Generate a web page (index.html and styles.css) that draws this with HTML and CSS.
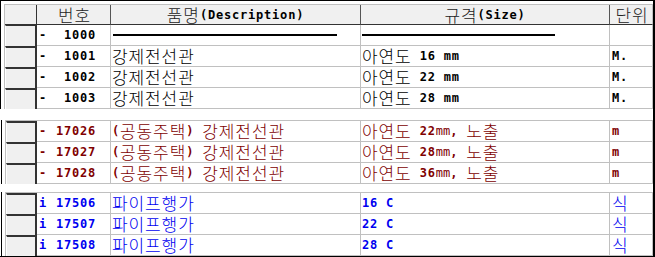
FILE: index.html
```html
<!DOCTYPE html>
<html lang="ko">
<head>
<meta charset="utf-8">
<title>Grid</title>
<link rel="stylesheet" href="styles.css">
</head>
<body>
<div class="sheet">
  <div class="sec sec-a">
    <div class="grid">
      <div class="row head">
        <div class="rh"></div>
        <div class="c c1 ctr"><span class="k hk">번호</span></div>
        <div class="c c2 ctr"><span class="k hk">품명</span><span class="b">(Description)</span></div>
        <div class="c c3 ctr"><span class="k hk">규격</span><span class="b">(Size)</span></div>
        <div class="c c4 ctr"><span class="k hk">단위</span></div>
      </div>
      <div class="row">
        <div class="rh"></div>
        <div class="c c1"><span class="b mk">-</span><span class="b num">1000</span></div>
        <div class="c c2"><span class="rule r2"></span></div>
        <div class="c c3"><span class="rule r3"></span></div>
        <div class="c c4"></div>
      </div>
      <div class="row">
        <div class="rh"></div>
        <div class="c c1"><span class="b mk">-</span><span class="b num">1001</span></div>
        <div class="c c2"><span class="k">강제전선관</span></div>
        <div class="c c3"><span class="k">아연도</span><span class="b"> 16 mm</span></div>
        <div class="c c4"><span class="b">M.</span></div>
      </div>
      <div class="row">
        <div class="rh"></div>
        <div class="c c1"><span class="b mk">-</span><span class="b num">1002</span></div>
        <div class="c c2"><span class="k">강제전선관</span></div>
        <div class="c c3"><span class="k">아연도</span><span class="b"> 22 mm</span></div>
        <div class="c c4"><span class="b">M.</span></div>
      </div>
      <div class="row">
        <div class="rh"></div>
        <div class="c c1"><span class="b mk">-</span><span class="b num">1003</span></div>
        <div class="c c2"><span class="k">강제전선관</span></div>
        <div class="c c3"><span class="k">아연도</span><span class="b"> 28 mm</span></div>
        <div class="c c4"><span class="b">M.</span></div>
      </div>
    </div>
  </div>
  <div class="gap gap1"></div>
  <div class="sec sec-b red">
    <div class="grid">
      <div class="row">
        <div class="rh"></div>
        <div class="c c1"><span class="b mk">-</span><span class="b num">17026</span></div>
        <div class="c c2"><span class="b">(</span><span class="k">공동주택</span><span class="b">) </span><span class="k">강제전선관</span></div>
        <div class="c c3"><span class="k">아연도</span><span class="b"> 22</span><span class="t">mm</span><span class="b">, </span><span class="k">노출</span></div>
        <div class="c c4"><span class="b">m</span></div>
      </div>
      <div class="row">
        <div class="rh"></div>
        <div class="c c1"><span class="b mk">-</span><span class="b num">17027</span></div>
        <div class="c c2"><span class="b">(</span><span class="k">공동주택</span><span class="b">) </span><span class="k">강제전선관</span></div>
        <div class="c c3"><span class="k">아연도</span><span class="b"> 28</span><span class="t">mm</span><span class="b">, </span><span class="k">노출</span></div>
        <div class="c c4"><span class="b">m</span></div>
      </div>
      <div class="row">
        <div class="rh"></div>
        <div class="c c1"><span class="b mk">-</span><span class="b num">17028</span></div>
        <div class="c c2"><span class="b">(</span><span class="k">공동주택</span><span class="b">) </span><span class="k">강제전선관</span></div>
        <div class="c c3"><span class="k">아연도</span><span class="b"> 36</span><span class="t">mm</span><span class="b">, </span><span class="k">노출</span></div>
        <div class="c c4"><span class="b">m</span></div>
      </div>
    </div>
  </div>
  <div class="gap gap2"></div>
  <div class="sec sec-c blue">
    <div class="grid">
      <div class="row">
        <div class="rh"></div>
        <div class="c c1"><span class="b mk">i</span><span class="b num">17506</span></div>
        <div class="c c2"><span class="k">파이프행가</span></div>
        <div class="c c3"><span class="b">16 C</span></div>
        <div class="c c4"><span class="k">식</span></div>
      </div>
      <div class="row">
        <div class="rh"></div>
        <div class="c c1"><span class="b mk">i</span><span class="b num">17507</span></div>
        <div class="c c2"><span class="k">파이프행가</span></div>
        <div class="c c3"><span class="b">22 C</span></div>
        <div class="c c4"><span class="k">식</span></div>
      </div>
      <div class="row">
        <div class="rh"></div>
        <div class="c c1"><span class="b mk">i</span><span class="b num">17508</span></div>
        <div class="c c2"><span class="k">파이프행가</span></div>
        <div class="c c3"><span class="b">28 C</span></div>
        <div class="c c4"><span class="k">식</span></div>
      </div>
    </div>
  </div>
</div>
</body>
</html>
```
FILE: styles.css
```css
* { box-sizing: border-box; }
html, body { margin: 0; padding: 0; background: #fff; }

.sheet {
  width: 655px;
  height: 257px;
  border-top: 1px solid #000;
  border-right: 2px solid #000;
  border-bottom: 1px solid #000;
  display: flex;
  flex-direction: column;
  color: #000;
}

.sec {
  border-left: 1px solid #000;
  padding-left: 3px;
}
.sec-a { padding-top: 3px; }
.sec-b, .sec-c { margin-left: 1px; }

.gap1 { height: 11px; }
.gap2 { height: 8px; }

.grid {
  border-top: 1px solid #c0c0c0;
  border-left: 1px solid #c0c0c0;
}

.row {
  display: grid;
  grid-template-columns: 32px 74px 250px 249px 43px;
  height: 21px;
}
.sec-b .row, .sec-c .row {
  grid-template-columns: 31px 74px 250px 249px 43px;
}
.row.head { height: 20px; }

.rh {
  background: #f0f0f0;
  border-left: 1px solid #fff;
  border-top: 2px solid #333;
  border-right: 2px solid #333;
}
.head + .row .rh { border-top-width: 1px; }

.c {
  display: flex;
  align-items: center;
  white-space: pre;
  overflow: hidden;
  border-right: 1px solid #c0c0c0;
  border-bottom: 1px solid #c0c0c0;
  padding-left: 1px;
}

.head .rh {
  border-top: 0;
  border-left: 0;
  border-right: 1px solid #333;
  border-bottom: 1px solid #333;
}
.head .c {
  background: #f0f0f0;
  border-right: 1px solid #555;
  border-bottom: 1px solid #333;
}
.head .c4 { border-right-color: #c0c0c0; }
.ctr { justify-content: center; padding-left: 0; }

.c1 { padding-left: 2px; }
.c4 { padding-left: 2px; }

.k {
  font-family: "Noto Sans CJK KR", sans-serif;
  font-weight: 300;
  font-size: 17px;
  letter-spacing: 0.9px;
  line-height: 18px;
}
.hk { color: #222; }
.b {
  font-family: "DejaVu Sans Mono", monospace;
  font-weight: bold;
  font-size: 12px;
  letter-spacing: 0.8px;
  line-height: 18px;
}
.t {
  font-family: "DejaVu Sans Mono", monospace;
  font-size: 12px;
  line-height: 18px;
}
.mk { width: 8px; }
.num { margin-left: auto; padding-right: 14px; }

.rule { display: block; height: 2px; background: #000; }
.r2 { width: 224px; margin-left: 1px; }
.r3 { width: 193px; margin-left: 0; }

.red { color: #800000; }
.blue { color: #0000f0; }
```
